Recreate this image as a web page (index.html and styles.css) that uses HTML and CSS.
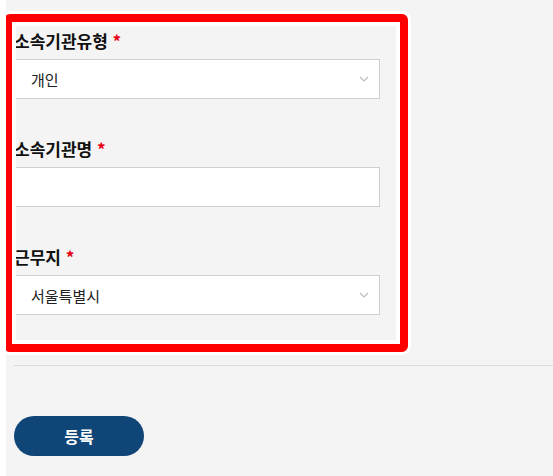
FILE: index.html
```html
<!DOCTYPE html>
<html lang="ko">
<head>
<meta charset="utf-8">
<title>소속기관 정보</title>
<link rel="stylesheet" href="styles.css">
</head>
<body>
<div class="page">
  <form class="form">
    <div class="field">
      <label class="label">소속기관유형 <span class="req">*</span></label>
      <div class="select">
        <span class="value">개인</span>
        <svg class="chev" width="10" height="6" viewBox="0 0 10 6"><path d="M1 1 L5 5 L9 1" fill="none" stroke="#bdbdbd" stroke-width="1.2"/></svg>
      </div>
    </div>
    <div class="field">
      <label class="label">소속기관명 <span class="req">*</span></label>
      <div class="input"></div>
    </div>
    <div class="field last">
      <label class="label">근무지 <span class="req">*</span></label>
      <div class="select">
        <span class="value">서울특별시</span>
        <svg class="chev" width="10" height="6" viewBox="0 0 10 6"><path d="M1 1 L5 5 L9 1" fill="none" stroke="#bdbdbd" stroke-width="1.2"/></svg>
      </div>
    </div>
    <hr class="divider">
    <div class="actions">
      <button type="button" class="btn">등록</button>
    </div>
  </form>
  <div class="highlight"></div>
</div>
</body>
</html>
```
FILE: styles.css
```css
* { box-sizing: border-box; }
html, body {
  margin: 0;
  padding: 0;
  background: #ffffff;
}
body {
  font-family: "Noto Sans CJK KR", "Noto Sans", sans-serif;
  color: #111;
}
.page {
  position: relative;
  margin-left: 6px;
  min-height: 476px;
  background: #f4f4f4;
  overflow: hidden;
}
.form {
  padding: 29px 0 20px 8px;
}
.field {
  width: 366px;
  margin-bottom: 38px;
}
.field.last {
  margin-bottom: 50px;
}
.label {
  display: block;
  font-size: 17px;
  line-height: 24px;
  font-weight: 700;
  color: #111;
  margin-bottom: 6px;
}
.req {
  color: #e60012;
}
.select, .input {
  height: 40px;
  background: #fff;
  border: 1px solid #cfcfcf;
}
.select {
  display: flex;
  align-items: center;
  justify-content: space-between;
  padding: 0 10px 0 16px;
}
.value {
  font-size: 15px;
  color: #222;
}
.chev {
  display: block;
}
.divider {
  margin: 0;
  border: 0;
  border-top: 1px solid #dcdcdc;
}
.actions {
  padding-top: 50px;
}
.btn {
  width: 130px;
  height: 40px;
  border: 0;
  border-radius: 20px;
  background: #0f4577;
  color: #fff;
  font-family: "Noto Sans CJK KR", "Noto Sans", sans-serif;
  font-size: 16px;
  font-weight: 700;
  cursor: pointer;
}
.highlight {
  position: absolute;
  left: -2px;
  top: 14px;
  width: 404px;
  height: 338px;
  border: 8px solid #ff0000;
  border-radius: 6px;
  box-shadow: 0 0 0 3px #ffffff, inset 0 0 0 4px #ffffff;
  pointer-events: none;
}
```
